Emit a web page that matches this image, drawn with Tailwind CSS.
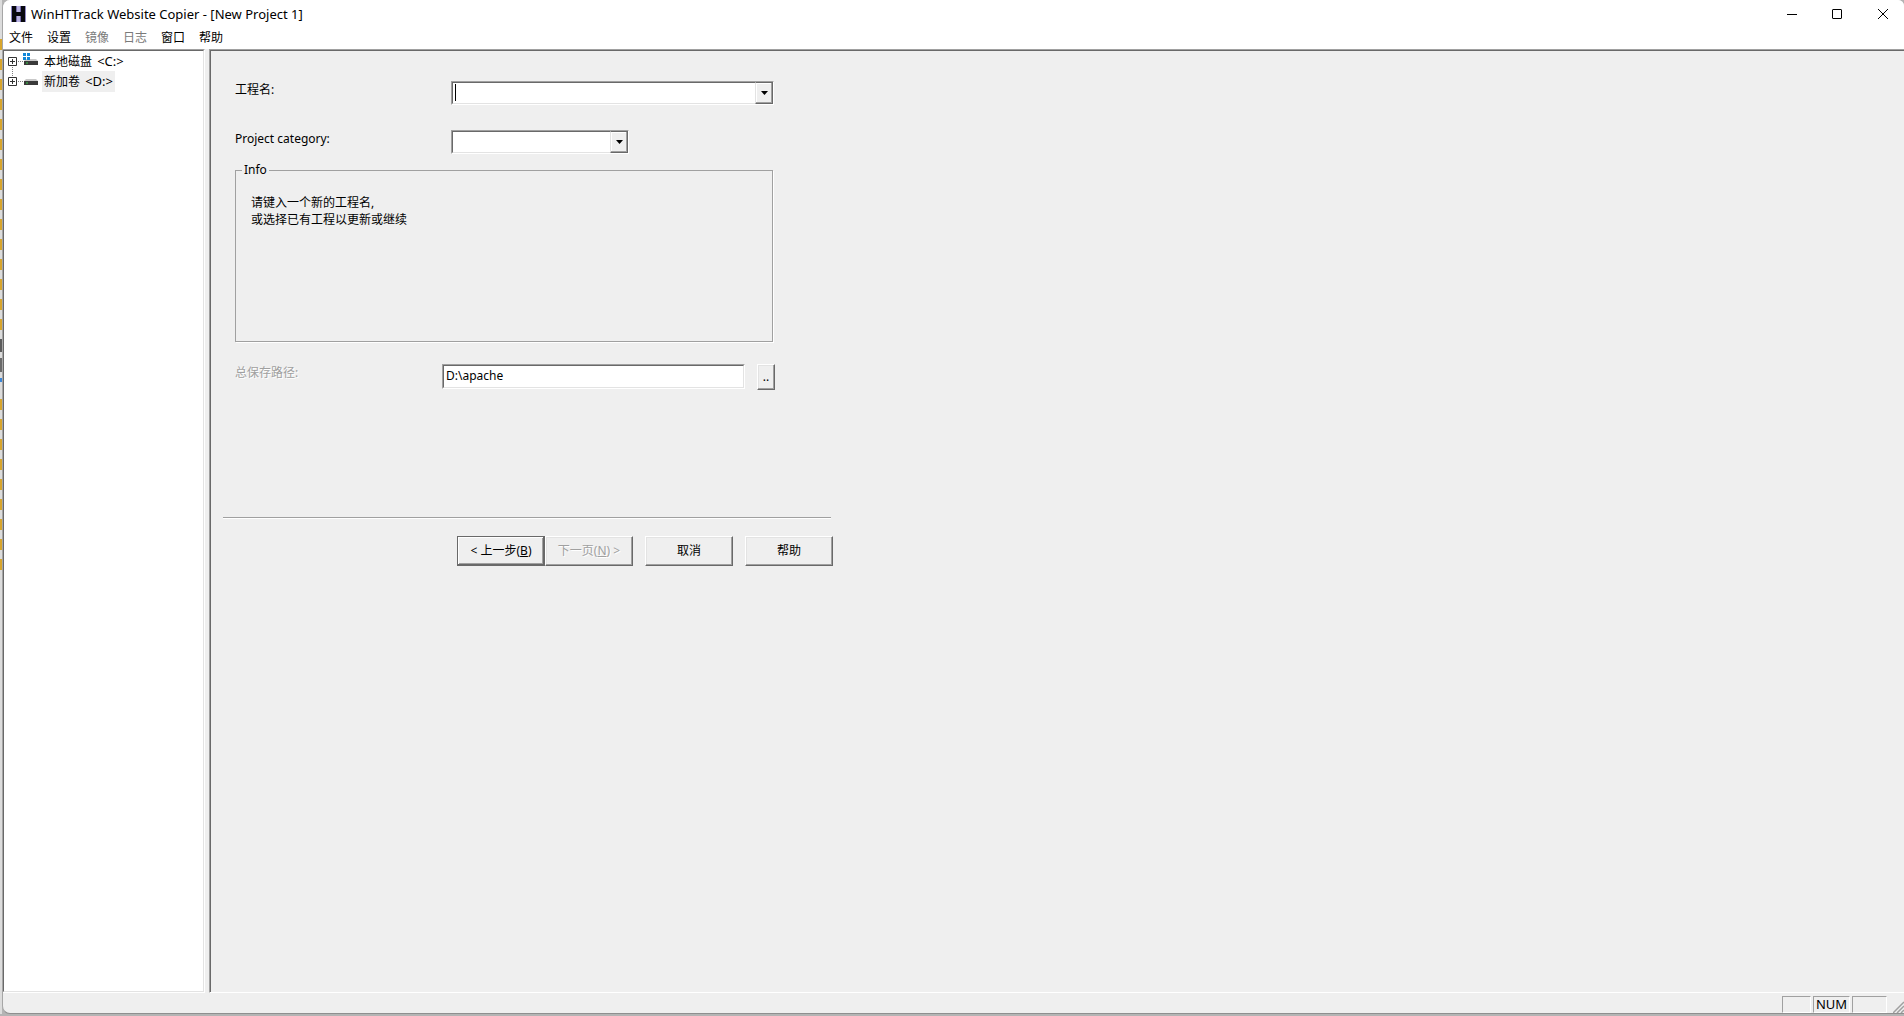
<!DOCTYPE html>
<html lang="zh-CN">
<head>
<meta charset="utf-8">
<title>WinHTTrack Website Copier - [New Project 1]</title>
<script src="https://cdn.jsdelivr.net/npm/@tailwindcss/browser@4"></script>
</head>
<body class="flex h-screen flex-col overflow-hidden bg-[#b4b4b4] font-['Noto_Sans','Noto_Sans_CJK_SC',sans-serif] text-[12px] leading-4 text-black">
<div class="flex min-h-0 flex-1">
  <!-- sliver of the window behind -->
  <div class="flex w-[2px] shrink-0 flex-col bg-[#dcdcdc]" aria-hidden="true">
    <div class="mt-[39px] h-[300px] bg-[repeating-linear-gradient(#d8a52c_0px,#d8a52c_11px,#dcdcdc_11px,#dcdcdc_20px)]"></div>
    <div class="h-[13px] bg-[#5c5c5c]"></div>
    <div class="mt-1.5 h-3.5 bg-[#6a6a6a]"></div>
    <div class="mt-1.5 h-1 bg-[#3b86d8]"></div>
    <div class="mt-[17px] h-[180px] bg-[repeating-linear-gradient(#d8a52c_0px,#d8a52c_11px,#dcdcdc_11px,#dcdcdc_20px)]"></div>
  </div>

  <div class="flex min-w-0 flex-1 flex-col overflow-hidden rounded-l-lg rounded-tr-md border-b border-l border-b-[#8f8f8f] border-l-[#a6a6a6] bg-[#efefef]">
    <header class="flex h-[27px] shrink-0 items-center bg-white pl-2">
      <svg class="mr-[5px] h-4 w-[15px] shrink-0" viewBox="0 0 15 16" aria-hidden="true">
        <path d="M0 0h15v16H0z" fill="#8f88c4"/><path d="M5 0h5v16H5z" fill="#b9b3e2"/>
        <path d="M1 0h4v6h5V0h4v16h-4v-6H5v6H1z" fill="#08080e"/>
        <path d="M5 0h1v6H5zM9 0h1v6H9zM5 10h1v6H5zM9 10h1v6H9z" fill="#726aa8"/>
      </svg>
      <h1 class="flex-1 text-[13px]">WinHTTrack Website Copier - [New Project 1]</h1>
      <div class="flex pr-[15px]">
        <button type="button" aria-label="Minimize" class="flex w-[46px] items-center justify-end"><svg class="h-3 w-3" viewBox="0 0 12 12"><path d="M1 6.5h10" stroke="#000"/></svg></button>
        <button type="button" aria-label="Maximize" class="flex w-[45px] items-center justify-end"><svg class="h-3 w-3" viewBox="0 0 12 12"><rect x="1.5" y="1.5" width="9" height="9" rx="0.5" fill="none" stroke="#000"/></svg></button>
        <button type="button" aria-label="Close" class="flex w-[46px] items-center justify-end"><svg class="h-3 w-3" viewBox="0 0 12 12"><path d="M1 1l10 10M11 1L1 11" stroke="#000" fill="none"/></svg></button>
      </div>
    </header>

    <nav class="flex h-[22px] shrink-0 items-center gap-3.5 bg-white pl-1.5">
      <button type="button">文件</button>
      <button type="button">设置</button>
      <button type="button" disabled class="text-[#7a7a7a]">镜像</button>
      <button type="button" disabled class="text-[#7a7a7a]">日志</button>
      <button type="button">窗口</button>
      <button type="button">帮助</button>
    </nav>

    <div class="flex min-h-0 flex-1 gap-1">
      <aside class="w-[202px] shrink-0 border-b border-r border-t border-b-white border-r-white border-t-[#a0a0a0]">
        <div class="h-full border-b border-l border-r border-t border-b-[#e3e3e3] border-l-[#696969] border-r-[#e3e3e3] border-t-[#696969] bg-white">
          <ul role="tree">
            <li role="treeitem" class="flex h-5 items-center pl-1">
              <svg class="h-5 w-[34px] shrink-0" viewBox="0 0 34 20" aria-hidden="true">
                <path d="M.5 6.5h8v8h-8zM2 10.5h5M4.500 8v5" fill="none" stroke="#333"/>
                <path d="M10 10.5h6M4.500 16v4" stroke="#808080" stroke-dasharray="1 1"/>
                <path d="M18 8h10l2 2H16z" fill="#c8c8c8"/><path d="M16 10h14v4H16z" fill="#3a3a3a"/><path d="M18 11.500h2v1h-2z" fill="#35d04a"/>
                <path d="M15 2h3v3h-3zM19 2h3v3h-3zM15 6h3v3h-3zM19 6h3v3h-3z" fill="#1287d8"/>
              </svg>
              <span class="px-0.5 leading-5">本地磁盘 <span class="pl-0.5 text-[13px]">&lt;C:&gt;</span></span>
            </li>
            <li role="treeitem" class="flex h-5 items-center pl-1">
              <svg class="h-5 w-[34px] shrink-0" viewBox="0 0 34 20" aria-hidden="true">
                <path d="M.5 6.5h8v8h-8zM2 10.5h5M4.500 8v5" fill="none" stroke="#333"/>
                <path d="M10 10.5h6M4.500 0v5" stroke="#808080" stroke-dasharray="1 1"/>
                <path d="M18 8h10l2 2H16z" fill="#c8c8c8"/><path d="M16 10h14v4H16z" fill="#3a3a3a"/><path d="M18 11.500h2v1h-2z" fill="#35d04a"/>
              </svg>
              <span class="bg-[#efefef] px-0.5 leading-5">新加卷 <span class="pl-0.5 text-[13px]">&lt;D:&gt;</span></span>
            </li>
          </ul>
        </div>
      </aside>

      <main class="min-w-0 flex-1 border-b border-l border-t border-b-white border-l-[#a0a0a0] border-t-[#a0a0a0]">
        <form class="h-full border-l border-t border-[#696969] pl-3">
          <div class="w-[610px]">
            <div class="flex flex-col pl-3 pt-[30px]">
              <div class="flex h-6 items-start">
                <label for="project" class="w-[216px] pt-px">工程名:</label>
                <div class="relative flex h-6 w-[323px] border border-b-white border-l-[#a0a0a0] border-r-white border-t-[#a0a0a0] bg-white">
                  <input id="project" type="text" class="min-w-0 flex-1 border-b border-l border-t border-b-[#e3e3e3] border-l-[#696969] border-t-[#696969] px-1 outline-none">
                  <span class="absolute left-[3px] top-[2px] h-[17px] w-px bg-black"></span>
                  <button type="button" aria-label="工程列表" class="flex w-[18px] items-center justify-center border border-[#696969] border-l-[#e3e3e3] bg-[#efefef] shadow-[inset_-1px_-1px_0_#a0a0a0,inset_1px_1px_0_#fff]">
                    <svg class="h-1 w-[7px]" viewBox="0 0 7 4"><path d="M0 0h7L3.500 4z"/></svg>
                  </button>
                </div>
              </div>
              <div class="mt-[25px] flex h-6 items-start">
                <label for="category" class="w-[216px] pt-px">Project category:</label>
                <div class="flex h-6 w-[178px] border border-b-white border-l-[#a0a0a0] border-r-white border-t-[#a0a0a0] bg-white">
                  <select id="category" class="min-w-0 flex-1 appearance-none border-b border-l border-t border-b-[#e3e3e3] border-l-[#696969] border-t-[#696969] px-1 outline-none"><option></option></select>
                  <span class="pointer-events-none flex w-[18px] items-center justify-center border border-[#696969] border-l-[#e3e3e3] bg-[#efefef] shadow-[inset_-1px_-1px_0_#a0a0a0,inset_1px_1px_0_#fff]">
                    <svg class="h-1 w-[7px]" viewBox="0 0 7 4"><path d="M0 0h7L3.500 4z"/></svg>
                  </span>
                </div>
              </div>
              <fieldset class="mt-2 h-[180px] w-[538px] border border-[#a0a0a0] pl-[15px] shadow-[1px_1px_0_#fff]">
                <legend class="-ml-[9px] px-0.5">Info</legend>
                <p class="mt-4 leading-[17px]">请键入一个新的工程名,<br>或选择已有工程以更新或继续</p>
              </fieldset>
              <div class="mt-[22px] flex h-[26px] items-start">
                <label for="path" class="w-[207px] pt-px text-[#a0a0a0] [text-shadow:1px_1px_0_#fff]">总保存路径:</label>
                <div class="h-[25px] w-[303px] border border-b-white border-l-[#a0a0a0] border-r-white border-t-[#a0a0a0]">
                  <input id="path" type="text" value="D:\apache" class="block h-full w-full border border-b-[#e3e3e3] border-l-[#696969] border-r-[#e3e3e3] border-t-[#696969] bg-white px-0.5 pb-0.5 outline-none">
                </div>
                <button type="button" class="ml-3 h-[26px] w-[18px] border border-b-[#696969] border-l-white border-r-[#696969] border-t-white shadow-[inset_-1px_-1px_0_#a0a0a0,inset_1px_1px_0_#e3e3e3]">..</button>
              </div>
            </div>
            <hr class="mr-0.5 mt-[127px] h-0.5 border-b border-t border-b-white border-t-[#a0a0a0]">
            <div class="mt-[17px] flex justify-end">
              <button type="button" class="h-[30px] w-[88px] border border-[#696969] shadow-[inset_-1px_-1px_0_#696969,inset_1px_1px_0_#fff,inset_-2px_-2px_0_#a0a0a0]">&lt; 上一步(<u>B</u>)</button>
              <button type="button" disabled class="h-[30px] w-[88px] border border-b-[#696969] border-l-white border-r-[#696969] border-t-white text-[#a0a0a0] shadow-[inset_-1px_-1px_0_#a0a0a0,inset_1px_1px_0_#e3e3e3] [text-shadow:1px_1px_0_#fff]">下一页(<u>N</u>) &gt;</button>
              <button type="button" class="ml-3 h-[30px] w-[88px] border border-b-[#696969] border-l-white border-r-[#696969] border-t-white shadow-[inset_-1px_-1px_0_#a0a0a0,inset_1px_1px_0_#e3e3e3]">取消</button>
              <button type="button" class="ml-3 h-[30px] w-[88px] border border-b-[#696969] border-l-white border-r-[#696969] border-t-white shadow-[inset_-1px_-1px_0_#a0a0a0,inset_1px_1px_0_#e3e3e3]">帮助</button>
            </div>
          </div>
        </form>
      </main>
    </div>

    <footer class="flex h-5 shrink-0 items-end justify-end gap-0.5">
      <span class="h-[17px] w-[29px] border border-b-white border-l-[#a0a0a0] border-r-white border-t-[#a0a0a0]"></span>
      <span class="h-[17px] w-[37px] border border-b-white border-l-[#a0a0a0] border-r-white border-t-[#a0a0a0] text-center text-[13px] leading-[15px]">NUM</span>
      <span class="h-[17px] w-[35px] border border-b-white border-l-[#a0a0a0] border-r-white border-t-[#a0a0a0]"></span>
      <svg class="ml-1 h-3 w-[11px]" viewBox="0 0 11 12" aria-hidden="true"><path d="M0 12L11 1M4 12l7-7M8 12l3-3" stroke="#a0a0a0" stroke-width="1.500"/></svg>
    </footer>
  </div>
</div>
<div class="h-[2px] shrink-0 bg-[#b4b4b4]"></div>
</body>
</html>
